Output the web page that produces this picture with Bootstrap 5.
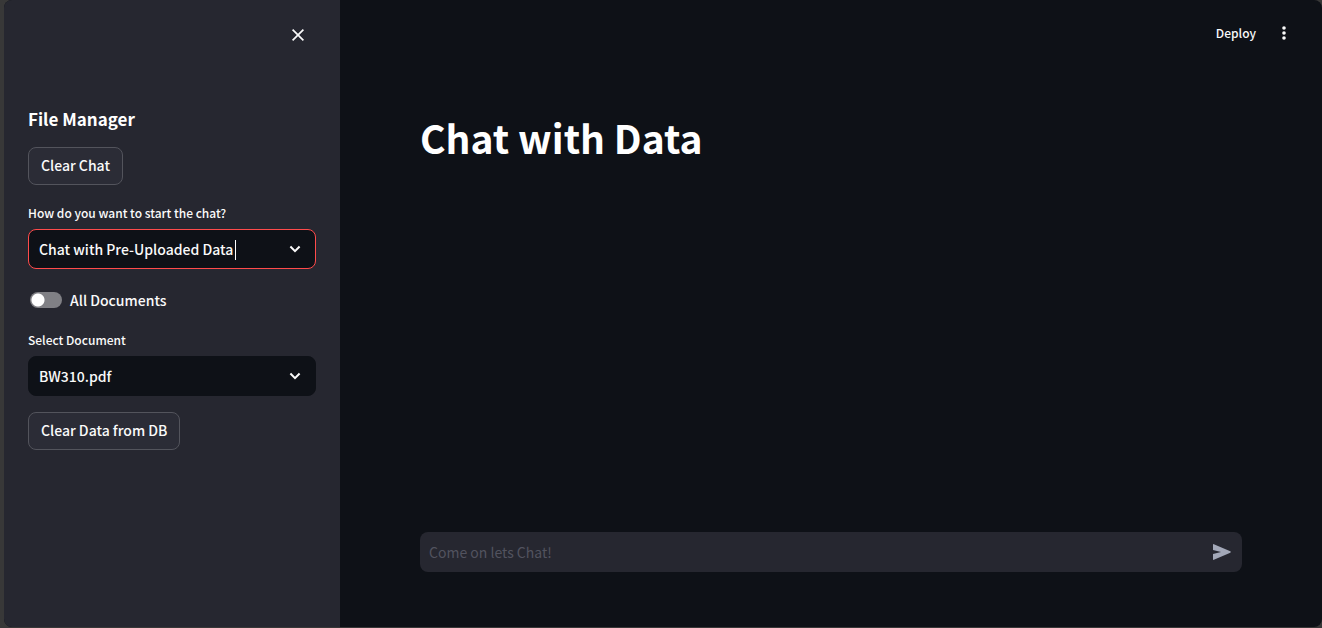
<!DOCTYPE html>
<html lang="en" data-bs-theme="dark">
<head>
<meta charset="utf-8">
<meta name="viewport" content="width=device-width, initial-scale=1">
<title>Chat with Data</title>
<link href="https://cdn.jsdelivr.net/npm/bootstrap@5.3.0/dist/css/bootstrap.min.css" rel="stylesheet">
<style>
  body { background: #383838; color: #fafafa; font-family: "Source Sans Pro", "Noto Sans CJK SC", sans-serif; font-size: 14px; font-weight: 500; line-height: 24px; }
  .app-frame { margin: 0 0 1px 4px; min-height: calc(100vh - 1px); background: #0e1117; border-radius: 8px; overflow: hidden; }
  .side-panel { width: 336px; background: #262730; padding: 20px 24px; }
  .side-head { height: 87px; }
  .side-title { font-size: 17px; line-height: 24px; font-weight: 700; margin: 0 0 16px; }
  .icon-btn { color: #fafafa; border: 0; line-height: 0; padding: 0; }
  .btn-panel { --bs-btn-color: #fafafa; --bs-btn-bg: #2b2c36; --bs-btn-border-color: #53545c; --bs-btn-hover-color: #ff4b4b; --bs-btn-hover-border-color: #ff4b4b; --bs-btn-hover-bg: #2b2c36; font-size: 14px; font-weight: 500; line-height: 22px; padding: 6px 12px 8px; border-radius: 8px; }
  .field-label { display: block; font-size: 12px; line-height: 24px; margin-bottom: 4px; }
  .picker { height: 40px; padding: 0 36px 0 10px; font-size: 14px; font-weight: 500; line-height: 24px; color: #fafafa; background: #0e1117; border: 1px solid #0e1117; border-radius: 8px; }
  .picker.active { border-color: #ff4b4b; }
  .chevron { right: 14px; top: 13px; pointer-events: none; }
  .text-caret { left: 207px; top: 11px; width: 1px; height: 20px; background: #fff; }
  .switch-row { padding: 3px 0 0 2px; }
  .switch-row .form-check-input { float: none; flex: none; width: 32px; height: 16px; margin: 0; border: 0; background: #808085 radial-gradient(circle at 8px 8px, #fff 6px, transparent 7px); }
  .top-bar { height: 66px; padding: 0 30px; gap: 20px; }
  .deploy { font-size: 12px; font-weight: 500; line-height: 24px; padding: 0; border: 0; color: #fafafa; }
  .content { padding: 0 80px 55px; }
  .page-title { font-size: 39px; line-height: 52px; font-weight: 700; margin: 45px 0 0; }
  .chat-box { background: #262730; border-radius: 8px; height: 40px; padding: 0 11px 0 9px; }
  .chat-box .form-control { color: #fafafa; background: transparent; border: 0; padding: 0; font-size: 14px; box-shadow: none; }
  .chat-box .form-control::placeholder { color: #52535f; opacity: 1; }
  .send { color: #a3a8b8; }
</style>
</head>
<body>
<div class="app-frame d-flex">
  <aside class="side-panel flex-shrink-0">
    <div class="side-head d-flex justify-content-end align-items-start pt-2 pe-2">
      <button type="button" class="btn icon-btn" aria-label="Close sidebar">
        <svg width="20" height="14" viewBox="0 0 20 14" fill="none" stroke="currentColor" stroke-width="1.7"><path d="M4.6 1.6 15.4 12.4M15.4 1.6 4.6 12.4"/></svg>
      </button>
    </div>
    <h2 class="side-title">File Manager</h2>
    <div class="d-flex flex-column gap-3 align-items-start">
      <button type="button" class="btn btn-panel">Clear Chat</button>
      <div class="w-100">
        <label class="field-label" for="mode">How do you want to start the chat?</label>
        <div class="position-relative">
          <select id="mode" class="form-control picker active"><option>Chat with Pre-Uploaded Data</option></select>
          <span class="text-caret position-absolute"></span>
          <svg class="chevron position-absolute" width="14" height="14" viewBox="0 0 14 14" fill="none" stroke="#fafafa" stroke-width="2"><path d="m2.4 4.5 4.6 4.6 4.6-4.6"/></svg>
        </div>
      </div>
      <div class="switch-row d-flex align-items-center gap-2">
        <input class="form-check-input rounded-pill" type="checkbox" role="switch" id="allDocs">
        <label for="allDocs">All Documents</label>
      </div>
      <div class="w-100">
        <label class="field-label" for="doc">Select Document</label>
        <div class="position-relative">
          <select id="doc" class="form-control picker"><option>BW310.pdf</option></select>
          <svg class="chevron position-absolute" width="14" height="14" viewBox="0 0 14 14" fill="none" stroke="#fafafa" stroke-width="2"><path d="m2.4 4.5 4.6 4.6 4.6-4.6"/></svg>
        </div>
      </div>
      <button type="button" class="btn btn-panel">Clear Data from DB</button>
    </div>
  </aside>
  <div class="flex-grow-1 d-flex flex-column">
    <header class="top-bar d-flex align-items-center justify-content-end">
      <button type="button" class="btn deploy">Deploy</button>
      <button type="button" class="btn icon-btn" aria-label="Menu">
        <svg width="16" height="16" viewBox="0 0 16 16" fill="currentColor"><circle cx="8" cy="3" r="1.8"/><circle cx="8" cy="8" r="1.8"/><circle cx="8" cy="13" r="1.8"/></svg>
      </button>
    </header>
    <main class="content flex-grow-1 d-flex flex-column">
      <h1 class="page-title">Chat with Data</h1>
      <form class="chat-box d-flex align-items-center mt-auto">
        <input type="text" class="form-control" placeholder="Come on lets Chat!" aria-label="Chat message">
        <button type="button" class="btn icon-btn send" aria-label="Send">
          <svg width="18" height="16" viewBox="0 0 18 16" fill="currentColor"><path d="M0 .7Q0-.2.9.2L17.3 7.3Q18.2 8 17.3 8.7L.9 15.8Q0 16.2 0 15.3V10L8 8 0 6Z"/></svg>
        </button>
      </form>
    </main>
  </div>
</div>
<script src="https://cdn.jsdelivr.net/npm/bootstrap@5.3.0/dist/js/bootstrap.bundle.min.js"></script>
</body>
</html>
